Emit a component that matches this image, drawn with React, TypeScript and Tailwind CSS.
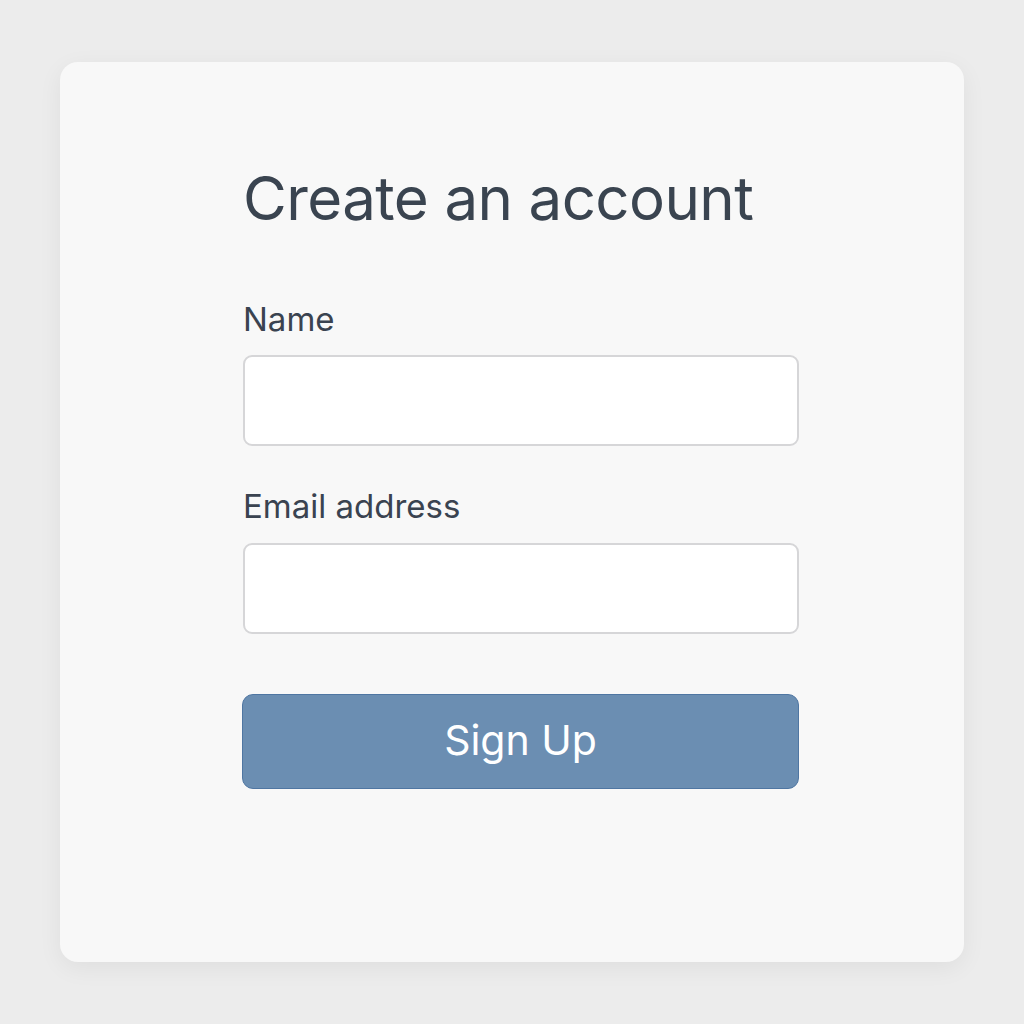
export default function App() {
  return (
    <div className="min-h-screen w-full bg-[#ececec] p-[60px] pt-[62px]" style={{ fontFamily: 'Inter, "Noto Sans", sans-serif' }}>
      <div className="h-[900px] w-[904px] rounded-[18px] bg-[#f8f8f8] pl-[183px] pt-[100px] shadow-[0_6px_24px_rgba(0,0,0,0.06)]">
        <div className="flex w-[557px] flex-col">
          <h1 className="text-[60px] font-normal leading-[72px] tracking-[-0.01em] text-[#3a4450]">Create an account</h1>

          <label className="mt-[67px] text-[33px] leading-[36px] text-[#3a4350]">Name</label>
          <div className="mt-[18px] h-[91px] w-[556px] rounded-[9px] border-2 border-[#d6d6d8] bg-white" />

          <label className="mt-[42px] text-[33px] leading-[36px] text-[#3a4350]">Email address</label>
          <div className="mt-[19px] h-[91px] w-[556px] rounded-[9px] border-2 border-[#d6d6d8] bg-white" />

          <button className="-ml-px mt-[60px] flex h-[95px] w-[557px] items-center justify-center rounded-[11px] border border-[#4f76a2] bg-[#6b8eb2] pb-[2px] text-[41px] text-white">
            Sign Up
          </button>
        </div>
      </div>
    </div>
  );
}
